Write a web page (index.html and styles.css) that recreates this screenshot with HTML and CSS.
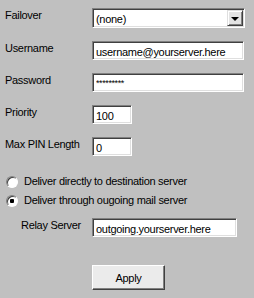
FILE: index.html
```html
<!DOCTYPE html>
<html lang="en">
<head>
    <meta charset="UTF-8">
    <title>Mail Server Settings</title>
    <link rel="stylesheet" href="styles.css">
</head>
<body>
    <form class="panel">
        <div class="fields">
            <label class="field-label" for="failover">Failover</label>
            <div class="select-wrap">
                <select id="failover">
                    <option>(none)</option>
                </select>
            </div>

            <label class="field-label" for="username">Username</label>
            <input class="text-box wide" type="text" id="username" value="username@yourserver.here">

            <label class="field-label" for="password">Password</label>
            <input class="text-box wide secret" type="text" id="password" value="*********">

            <label class="field-label" for="priority">Priority</label>
            <input class="text-box short" type="text" id="priority" value="100">

            <label class="field-label" for="pin">Max PIN Length</label>
            <input class="text-box short" type="text" id="pin" value="0">
        </div>

        <div class="delivery">
            <label class="radio-row"><input type="radio" name="delivery"> Deliver directly to destination server</label>
            <label class="radio-row"><input type="radio" name="delivery" checked> Deliver through ougoing mail server</label>
            <div class="relay">
                <label class="field-label" for="relay">Relay Server</label>
                <input class="text-box relay-box" type="text" id="relay" value="outgoing.yourserver.here">
            </div>
        </div>

        <div class="actions">
            <button type="button">Apply</button>
        </div>
    </form>
</body>
</html>
```

FILE: styles.css
```css
body {
    margin: 0;
    background-color: #c0c0c0;
    font-family: "Liberation Sans", Arial, sans-serif;
    font-size: 11px;
    letter-spacing: -0.3px;
    color: #000;
}
.panel {
    width: 254px;
    height: 298px;
    padding: 8px 0 0 5px;
    box-sizing: border-box;
}
.fields {
    display: grid;
    grid-template-columns: 87px auto;
    row-gap: 13px;
    justify-items: start;
}
.field-label {
    line-height: 13px;
    padding-top: 1px;
}
.text-box, select {
    font-family: inherit;
    font-size: 11px;
    letter-spacing: -0.3px;
    color: #000;
    background-color: #fff;
    height: 19px;
    margin: 0;
    padding: 3px 2px 0 3px;
    box-sizing: border-box;
    border: 1px solid;
    border-color: #808080 #fff #fff #808080;
    box-shadow: inset 1px 1px #404040, inset -1px -1px #dfdfdf;
    border-radius: 0;
    outline: none;
}
.wide {
    width: 152px;
}
.short {
    width: 40px;
}
.secret {
    font-size: 9px;
    letter-spacing: -0.4px;
    padding-top: 0;
}
.select-wrap {
    position: relative;
    width: 153px;
    height: 20px;
}
select {
    appearance: none;
    -webkit-appearance: none;
    width: 100%;
    height: 20px;
    padding-top: 2px;
}
.select-wrap::after {
    content: "";
    position: absolute;
    top: 2px;
    right: 2px;
    width: 16px;
    height: 16px;
    box-sizing: border-box;
    background-color: #e4e4e4;
    border: 1px solid;
    border-color: #dfdfdf #404040 #404040 #dfdfdf;
    box-shadow: inset 1px 1px #fff, inset -1px -1px #808080;
    pointer-events: none;
}
.select-wrap::before {
    content: "";
    position: absolute;
    top: 9px;
    right: 6px;
    border-left: 4px solid transparent;
    border-right: 4px solid transparent;
    border-top: 4px solid #000;
    z-index: 1;
    pointer-events: none;
}
.delivery {
    margin-top: 19px;
    display: flex;
    flex-direction: column;
    gap: 6px;
}
.radio-row {
    display: flex;
    align-items: center;
    gap: 6px;
    line-height: 13px;
}
.radio-row input {
    appearance: none;
    -webkit-appearance: none;
    width: 12px;
    height: 12px;
    margin: 0 0 0 1px;
    border-radius: 50%;
    box-sizing: border-box;
    border: 1px solid;
    border-color: #808080 #fff #fff #808080;
    box-shadow: inset 1px 1px #404040;
    background-color: #fff;
}
.radio-row input:checked {
    background: radial-gradient(circle, #000 0 2px, #fff 2.5px);
}
.relay {
    display: flex;
    align-items: flex-start;
    margin-top: 5px;
    padding-left: 16px;
}
.relay .field-label {
    width: 71px;
}
.relay-box {
    width: 145px;
}
.actions {
    margin-top: 28px;
    padding-left: 87px;
}
button {
    width: 73px;
    height: 25px;
    margin: 0;
    font-family: inherit;
    font-size: 11px;
    letter-spacing: -0.3px;
    color: #000;
    background-color: #ebebeb;
    border: 1px solid;
    border-color: #fff #404040 #404040 #fff;
    box-shadow: inset -1px -1px #808080;
    border-radius: 0;
    padding: 0;
}
```
